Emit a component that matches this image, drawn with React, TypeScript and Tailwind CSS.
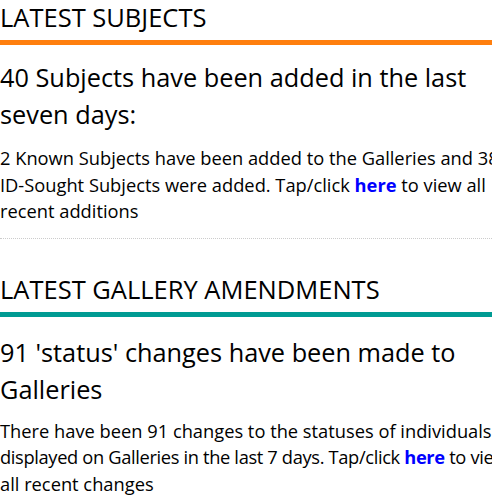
import React from "react";

const font = { fontFamily: '"Segoe UI", "Open Sans", "Noto Sans", sans-serif' };

export default function App() {
  return (
    <div className="w-[492px] h-[503px] overflow-hidden bg-white text-black" style={font}>
      <div className="w-[510px]">
        <h2 className="text-[25.5px] leading-[32px] pt-[1px] pb-[7px] border-b-[5px] border-[#ff7f0e] font-normal">
          LATEST SUBJECTS
        </h2>
        <h3 className="mt-[14px] text-[25.3px] leading-[37px] font-normal">
          40 Subjects have been added in the last seven days:
        </h3>
        <p className="mt-[12px] text-[18.3px] leading-[26.5px] whitespace-nowrap">
          2 Known Subjects have been added to the Galleries and 38
          <br />
          ID-Sought Subjects were added. Tap/click{" "}
          <a className="font-bold text-[#0000ff]">here</a> to view all
          <br />
          recent additions
        </p>
        <div className="mt-[13px] border-b border-dotted border-[#cccccc]" />
        <h2 className="mt-[33px] text-[25.5px] leading-[32px] pt-[1px] pb-[7px] border-b-[5px] border-[#009b93] font-normal">
          LATEST GALLERY AMENDMENTS
        </h2>
        <h3 className="mt-[17px] text-[25.3px] leading-[37px] font-normal">
          91 'status' changes have been made to Galleries
        </h3>
        <p className="mt-[10px] text-[18.3px] leading-[26.5px] whitespace-nowrap">
          There have been 91 changes to the statuses of individuals
          <br />
          <span className="tracking-[-0.35px]">
            displayed on Galleries in the last 7 days. Tap/click{" "}
            <a className="font-bold text-[#0000ff]">here</a> to view
          </span>
          <br />
          all recent changes
        </p>
      </div>
    </div>
  );
}
